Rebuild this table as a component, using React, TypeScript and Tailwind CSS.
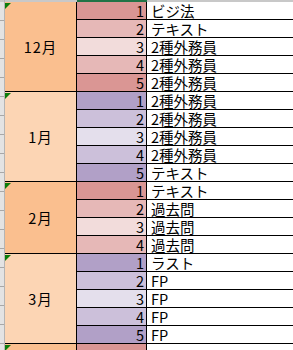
import React from "react";

type Block = { month: string; dark: boolean; palette: "rose" | "purple"; items: string[] };

const rose = ["bg-[#DA9694]", "bg-[#E6B8B7]", "bg-[#F2DCDB]", "bg-[#E6B8B7]", "bg-[#DA9694]"];
const purple = ["bg-[#B1A0C7]", "bg-[#CCC0DA]", "bg-[#E4DFEC]", "bg-[#CCC0DA]", "bg-[#B1A0C7]"];

const blocks: Block[] = [
  { month: "12月", dark: true, palette: "rose", items: ["ビジ法", "テキスト", "2種外務員", "2種外務員", "2種外務員"] },
  { month: "1月", dark: false, palette: "purple", items: ["2種外務員", "2種外務員", "2種外務員", "2種外務員", "テキスト"] },
  { month: "2月", dark: true, palette: "rose", items: ["テキスト", "過去問", "過去問", "過去問"] },
  { month: "3月", dark: false, palette: "purple", items: ["ラスト", "FP", "FP", "FP", "FP"] },
  { month: "", dark: true, palette: "rose", items: [""] },
];

const font = { fontFamily: '"Noto Sans CJK JP", "Noto Sans", sans-serif' };

export default function App() {
  return (
    <div className="w-[293px] h-[350px] overflow-hidden bg-white flex text-black" style={font}>
      {/* left strip */}
      <div className="w-[5px] shrink-0 flex flex-col bg-[#e3e3e3] border-r border-[#b4b4b4]">
        <div className="h-[2px] shrink-0 bg-[#c8c8c8]" />
        {Array.from({ length: 19 }).map((_, i) => (
          <div key={i} className="h-[19px] shrink-0 border-b border-[#a8a8a8]" />
        ))}
      </div>
      <div className="flex-1 flex flex-col">
        {/* top line */}
        <div className="h-[2px] shrink-0 flex">
          <div className="w-[72px] bg-[#c8c8c8]" />
          <div className="w-[70px] bg-[#217346]" />
          <div className="flex-1 bg-[#c8c8c8]" />
        </div>
        {blocks.map((b, bi) => {
          const pal = b.palette === "rose" ? rose : purple;
          return (
            <div key={bi} className="flex shrink-0">
              <div
                className={`relative w-[72px] shrink-0 border-r border-b border-black flex items-center justify-center text-[14.5px] leading-none ${
                  b.dark ? "bg-[#FABF8F]" : "bg-[#FCD5B4]"
                }`}
              >
                <span className="absolute top-[1px] left-0 w-0 h-0 border-t-[6px] border-r-[6px] border-t-[#0a7d0a] border-r-transparent" />
                <span className="pt-[2px] tracking-[1px]">{b.month}</span>
              </div>
              <div className="flex-1 flex flex-col">
                {b.items.map((t, i) => (
                  <div key={i} className="h-[18px] shrink-0 flex border-b border-black text-[14.5px] leading-none">
                    <div className={`w-[70px] shrink-0 border-r border-black flex items-end justify-end pr-[2px] pb-[1px] ${pal[i]}`}>
                      {b.month ? i + 1 : ""}
                    </div>
                    <div className="flex-1 flex items-end pl-[4px] pb-[1px] whitespace-nowrap">{t}</div>
                  </div>
                ))}
              </div>
            </div>
          );
        })}
      </div>
    </div>
  );
}
